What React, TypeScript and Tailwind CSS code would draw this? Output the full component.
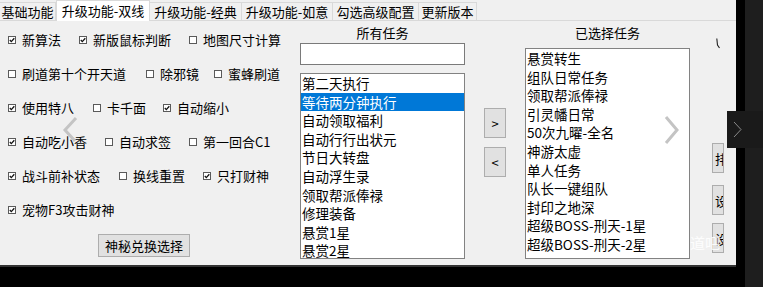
import React from "react";

// left panel option rows: [label, checked, width]
const rows: [string, boolean, number][][] = [
  [["新算法", true, 71], ["新版鼠标判断", true, 110], ["地图尺寸计算", false, 100]],
  [["刷道第十个开天道", false, 138], ["除邪镜", false, 68], ["蜜蜂刷道", false, 80]],
  [["使用特八", true, 85], ["卡千面", false, 70], ["自动缩小", true, 80]],
  [["自动吃小香", true, 97], ["自动求签", false, 84], ["第一回合C1", false, 90]],
  [["战斗前补状态", true, 111], ["换线重置", false, 84], ["只打财神", true, 80]],
  [["宠物F3攻击财神", true, 150]],
];

const allTasks = [
  "第二天执行",
  "等待两分钟执行",
  "自动领取福利",
  "自动行行出状元",
  "节日大转盘",
  "自动浮生录",
  "领取帮派俸禄",
  "修理装备",
  "悬赏1星",
  "悬赏2星",
];

const chosenTasks = [
  "悬赏转生",
  "组队日常任务",
  "领取帮派俸禄",
  "引灵幡日常",
  "50次九曜-全名",
  "神游太虚",
  "单人任务",
  "队长一键组队",
  "封印之地深",
  "超级BOSS-刑天-1星",
  "超级BOSS-刑天-2星",
];

const tabs: [string, string][] = [
  ["基础功能", "w-[56px]"],
  ["升级功能-双线", "w-[94px]"],
  ["升级功能-经典", "w-[92px]"],
  ["升级功能-如意", "w-[91px]"],
  ["勾选高级配置", "w-[86px]"],
  ["更新版本", "w-[58px]"],
];

const Box: React.FC<{ checked: boolean }> = ({ checked }) => (
  <svg width="8" height="8" viewBox="0 0 8 8" className="shrink-0">
    <rect x="0.5" y="0.5" width="7" height="7" fill="#fff" stroke="#5a5a5a" />
    {checked && <path d="M1.8 4 L3.3 5.6 L6.3 2.2" fill="none" stroke="#111" strokeWidth="1.3" />}
  </svg>
);

const WinButton: React.FC<{ className?: string; children: React.ReactNode }> = ({ className, children }) => (
  <div
    className={
      "flex items-center justify-center border border-[#adadad] bg-[#e1e1e1] text-[13px] leading-none " +
      (className ?? "")
    }
  >
    {children}
  </div>
);

export default function App() {
  return (
    <div className="relative flex h-[287px] w-[763px] overflow-hidden bg-black font-['Noto_Sans_CJK_SC',sans-serif] text-[13px] text-black">
      <div className="flex w-[736px] flex-col">
        <div className="flex h-[265px] flex-col bg-[#f0f0f0]">
          {/* tab strip */}
          <div className="flex h-[21px] shrink-0 items-end border-b border-[#d9d9d9] pr-[1px]">
            {tabs.map(([t, w], i) =>
              i === 1 ? (
                <div
                  key={t}
                  className={`relative z-10 mb-[-1px] flex h-[21px] items-start justify-center border-x border-t border-[#d9d9d9] bg-white pt-[1px] leading-[17px] ${w}`}
                >
                  {t}
                </div>
              ) : (
                <div
                  key={t}
                  className={`flex h-[18px] items-center justify-center border-t border-r border-[#d9d9d9] bg-[#f0f0f0] leading-[17px] ${w}`}
                >
                  {t}
                </div>
              )
            )}
          </div>

          <div className="flex flex-1">
            {/* options */}
            <div className="flex w-[300px] shrink-0 flex-col pt-[2px]">
              {rows.map((row, ri) => (
                <div key={ri} className="flex h-[34px] items-center pl-[8px]">
                  {row.map(([label, checked, w]) => (
                    <div key={label} className="flex items-center gap-[6px]" style={{ width: w }}>
                      <Box checked={checked} />
                      <span className="whitespace-nowrap leading-[16px]">{label}</span>
                    </div>
                  ))}
                </div>
              ))}
              <WinButton className="ml-[98px] mt-[7px] h-[23px] w-[92px]">神秘兑换选择</WinButton>
            </div>

            {/* all tasks */}
            <div className="flex w-[165px] shrink-0 flex-col pt-[3px]">
              <div className="h-[18px] text-center leading-[18px]">所有任务</div>
              <div className="mt-[1px] h-[22px] border border-[#7a7a7a] bg-white" />
              <div className="mt-[8px] h-[186px] overflow-hidden border border-[#828282] bg-white text-[13.5px]">
                {allTasks.map((t, i) => (
                  <div
                    key={t}
                    className={
                      "h-[18.6px] whitespace-nowrap pl-[1px] leading-[18.6px] " +
                      (i === 1 ? "bg-[#0078d7] text-white" : "")
                    }
                  >
                    {t}
                  </div>
                ))}
              </div>
            </div>

            {/* move buttons */}
            <div className="ml-[19px] flex w-[22px] shrink-0 flex-col gap-[9px] pt-[87px]">
              <WinButton className="h-[30px] w-[22px]">&gt;</WinButton>
              <WinButton className="h-[30px] w-[22px]">&lt;</WinButton>
            </div>

            {/* chosen tasks */}
            <div className="ml-[19px] flex w-[165px] shrink-0 flex-col pt-[3px]">
              <div className="h-[18px] text-center leading-[18px]">已选择任务</div>
              <div className="mt-[6px] h-[211px] overflow-hidden border border-[#828282] bg-white text-[13.5px]">
                {chosenTasks.map((t) => (
                  <div key={t} className="h-[18.6px] whitespace-nowrap pl-[1px] leading-[18.6px]">
                    {t}
                  </div>
                ))}
              </div>
            </div>

            {/* clipped side buttons */}
            <div className="ml-[22px] flex w-[12px] shrink-0 flex-col">
              <svg width="4" height="11" viewBox="0 0 4 11" className="ml-[4px] mt-[17px]">
                <path d="M0.8 0.5 L1.5 7 L3.5 10" fill="none" stroke="#222" strokeWidth="1.1" />
              </svg>
              <WinButton className="mt-[94px] h-[30px] w-[12px] justify-start overflow-hidden pl-[2px]">排</WinButton>
              <WinButton className="mt-[12px] h-[30px] w-[12px] justify-start overflow-hidden pl-[2px]">设</WinButton>
              <WinButton className="mt-[8px] h-[30px] w-[12px] justify-start overflow-hidden pl-[2px]">设</WinButton>
            </div>
          </div>
        </div>
        <div className="h-[2px] bg-[#333]" />
      </div>
      <div className="w-[9px] bg-black" />
      <div className="flex-1 bg-[#1e1e1e]" />

      {/* viewer overlays */}
      <svg className="absolute left-[62px] top-[116px]" width="18" height="28" viewBox="0 0 18 28">
        <path d="M14 2 L3 14 L13 25" fill="none" stroke="#c4c4c4" strokeWidth="3" />
      </svg>
      <svg className="absolute left-[663px] top-[115px]" width="18" height="30" viewBox="0 0 18 30">
        <path d="M3 2 L14 15 L3 28" fill="none" stroke="#c4c4c4" strokeWidth="3" />
      </svg>
      <div className="absolute left-[727px] top-[111px] flex h-[37px] w-[36px] items-center bg-[#1a1a1a] pl-[6px]">
        <svg width="10" height="17" viewBox="0 0 10 17">
          <path d="M1 1 L8 8.5 L1 16" fill="none" stroke="#8a8a8a" strokeWidth="1" />
        </svg>
      </div>
      <div className="absolute left-[690px] top-[234px] text-[15px] leading-[18px] text-white/85">道吧</div>
    </div>
  );
}
